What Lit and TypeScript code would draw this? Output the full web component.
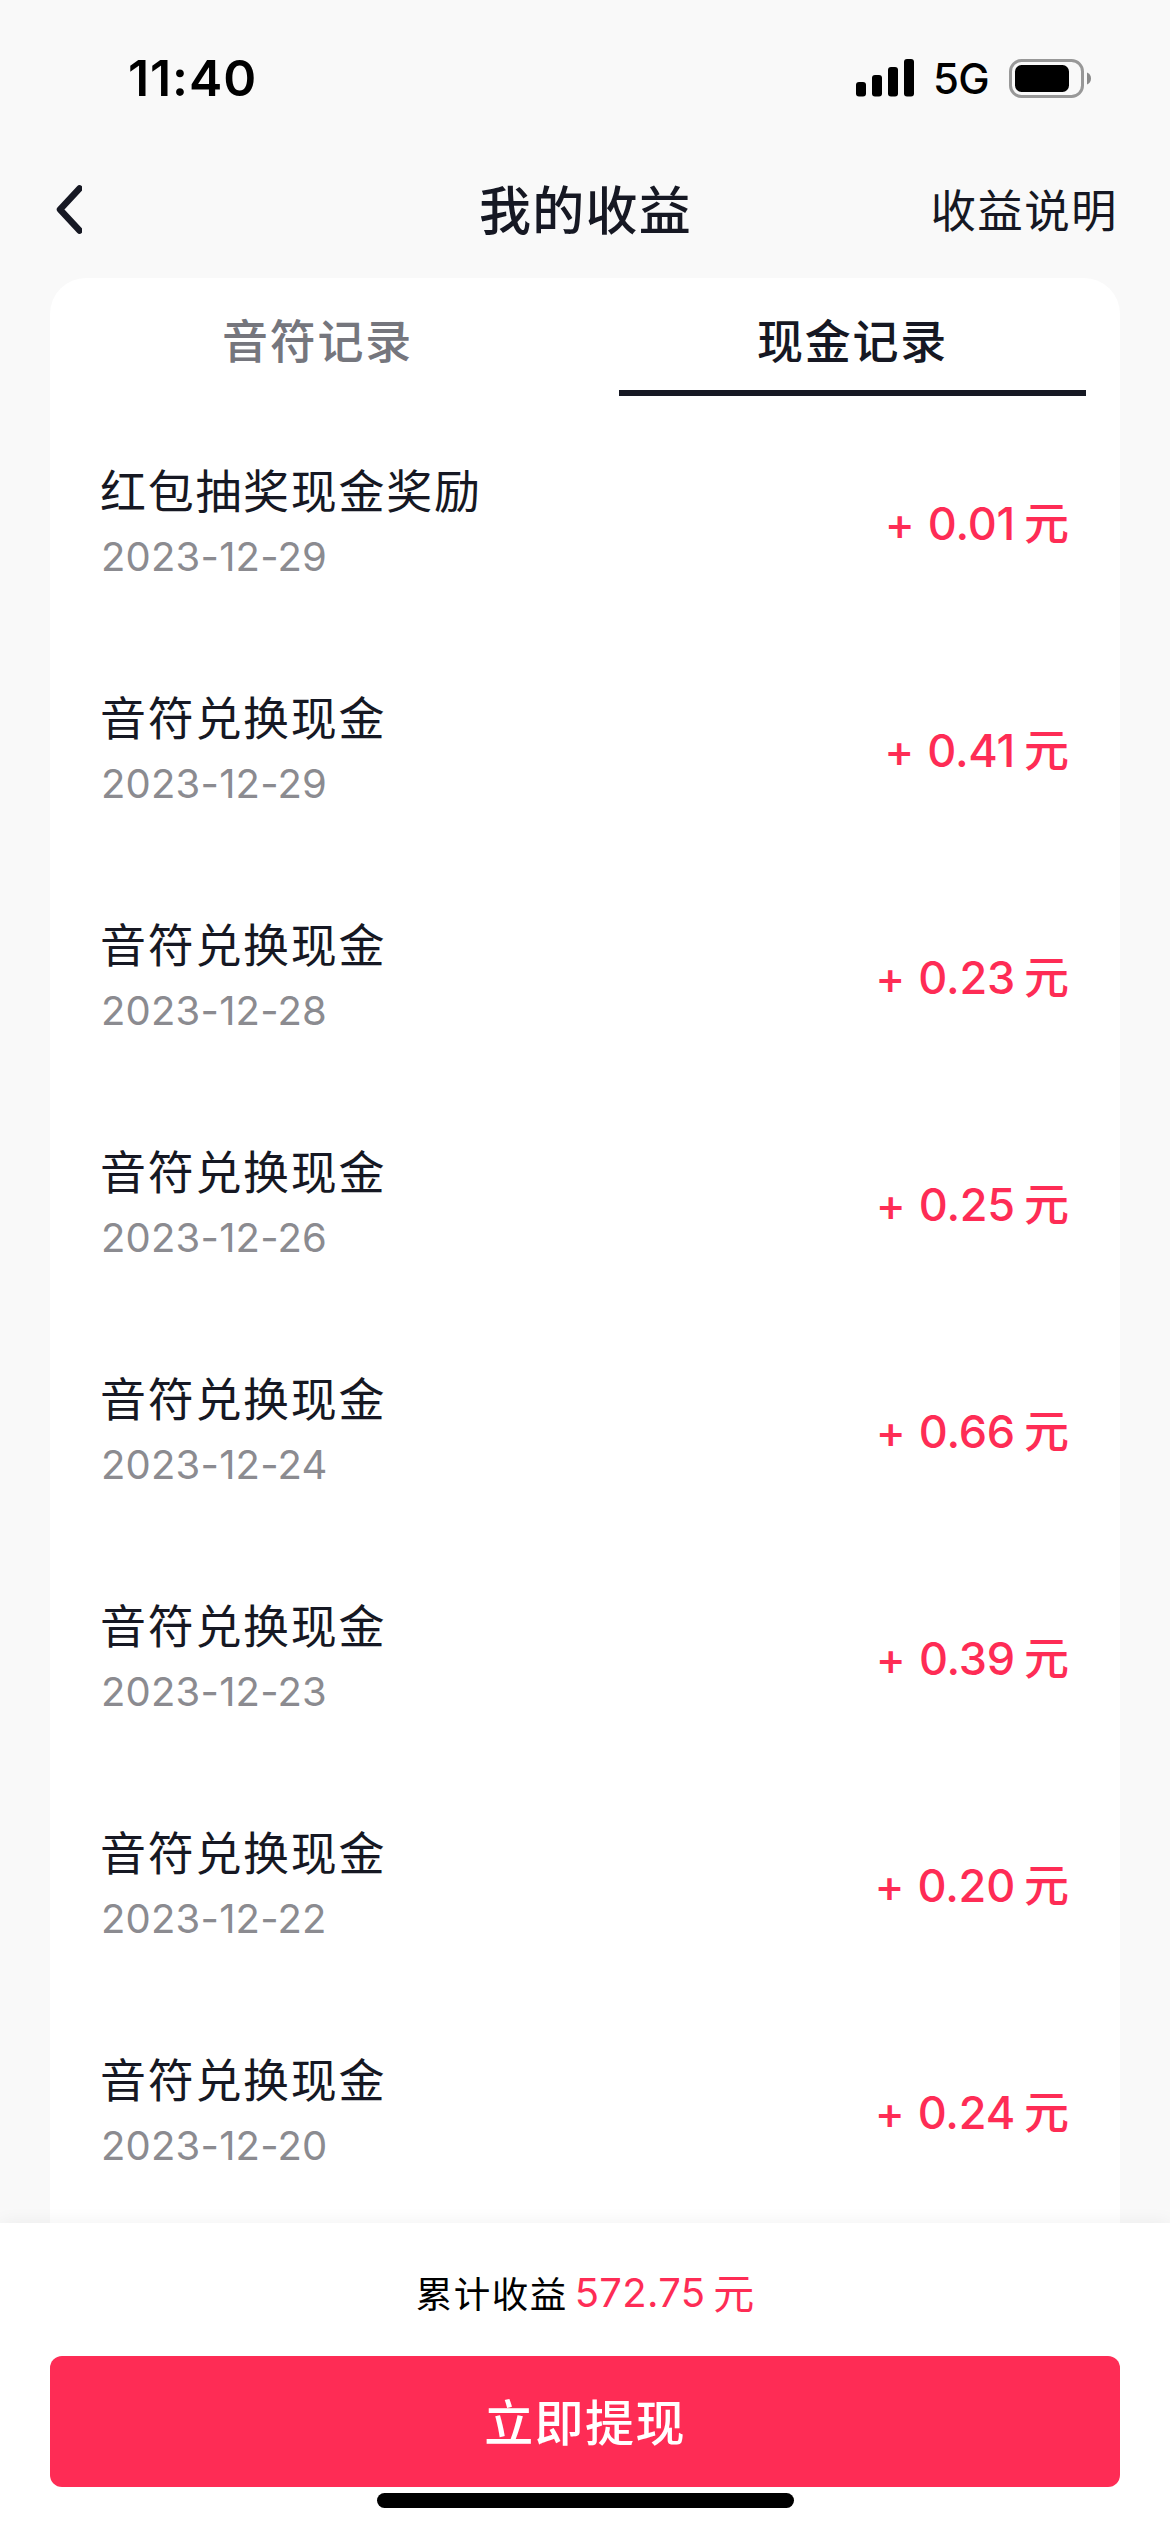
import { LitElement, html, css } from "lit";
import { customElement, property, state } from "lit/decorators.js";
import { classMap } from "lit/directives/class-map.js";

interface EarningRecord {
  title: string;
  date: string;
  amount: string;
}

const RECORDS: EarningRecord[] = [
  { title: "红包抽奖现金奖励", date: "2023-12-29", amount: "0.01" },
  { title: "音符兑换现金", date: "2023-12-29", amount: "0.41" },
  { title: "音符兑换现金", date: "2023-12-28", amount: "0.23" },
  { title: "音符兑换现金", date: "2023-12-26", amount: "0.25" },
  { title: "音符兑换现金", date: "2023-12-24", amount: "0.66" },
  { title: "音符兑换现金", date: "2023-12-23", amount: "0.39" },
  { title: "音符兑换现金", date: "2023-12-22", amount: "0.20" },
  { title: "音符兑换现金", date: "2023-12-20", amount: "0.24" },
];

@customElement("status-bar")
export class StatusBar extends LitElement {
  static styles = css`
    :host {
      display: flex;
      align-items: center;
      justify-content: space-between;
      height: 156px;
      padding: 0 78px 0 128px;
      box-sizing: border-box;
      color: #000;
    }
    .time {
      font-size: 50px;
      font-weight: 600;
      letter-spacing: 0.9px;
    }
    .indicators {
      display: flex;
      align-items: center;
    }
    .signal {
      display: block;
      margin-right: 19px;
    }
    .network {
      font-size: 42px;
      font-weight: 450;
      line-height: 50px;
      margin: 2px 20px 0 0;
      letter-spacing: -0.7px;
    }
    .battery {
      display: block;
    }
  `;

  render() {
    return html`
      <span class="time">11:40</span>
      <div class="indicators">
        <svg class="signal" width="58" height="38" viewBox="0 0 58 38">
          <rect x="0" y="23" width="10" height="14.5" rx="3" />
          <rect x="16" y="16" width="10" height="21.5" rx="3" />
          <rect x="32" y="8" width="10" height="29.5" rx="3" />
          <rect x="48" y="0" width="10" height="37.5" rx="3" />
        </svg>
        <span class="network">5G</span>
        <svg class="battery" width="83" height="39" viewBox="0 0 83 39">
          <rect x="1.5" y="1.5" width="72" height="36" rx="11" fill="none" stroke="#989898" stroke-width="3" />
          <rect x="6" y="6" width="54" height="27" rx="6.5" />
          <path d="M78 13.5c2.600 1 4 3.300 4 6s-1.400 5-4 6z" fill="#8a8a8a" />
        </svg>
      </div>
    `;
  }
}

@customElement("nav-header")
export class NavHeader extends LitElement {
  static styles = css`
    :host {
      display: grid;
      grid-template-columns: 1fr auto 1fr;
      align-items: center;
      height: 108px;
      padding: 0 52px 0 53px;
      color: #161823;
    }
    .back {
      display: block;
    }
    .title {
      padding-bottom: 5px;
      font-size: 52px;
      font-weight: 500;
      letter-spacing: 1.3px;
    }
    .link {
      justify-self: end;
      padding-bottom: 5px;
      font-size: 45.5px;
      letter-spacing: 1.4px;
    }
  `;

  render() {
    return html`
      <svg class="back" width="29" height="54" viewBox="0 0 29 54">
        <path d="M26.500 5.500L7 26.500L26.500 47.500" fill="none" stroke="#161823" stroke-width="6.500"
          stroke-linecap="round" stroke-linejoin="round" />
      </svg>
      <span class="title">我的收益</span>
      <span class="link">收益说明</span>
    `;
  }
}

@customElement("record-row")
export class RecordRow extends LitElement {
  @property({ attribute: false }) record!: EarningRecord;

  static styles = css`
    :host {
      display: flex;
      align-items: center;
      justify-content: space-between;
      height: 227px;
      padding: 0 51px 0 50px;
    }
    .title {
      font-size: 46px;
      line-height: 63px;
      padding-bottom: 3px;
      letter-spacing: 1.7px;
      color: #161823;
    }
    .date {
      padding-left: 1px;
      font-size: 40px;
      line-height: 62px;
      letter-spacing: 0.2px;
      color: #8b8b90;
    }
    .amount {
      display: flex;
      align-items: center;
      font-size: 45px;
      line-height: 60px;
      font-weight: 500;
      color: #fe2c55;
    }
    .value {
      margin: 0 9px 0 13px;
      letter-spacing: -0.2px;
    }
  `;

  render() {
    const { title, date, amount } = this.record;
    return html`
      <div>
        <div class="title">${title}</div>
        <div class="date">${date}</div>
      </div>
      <div class="amount">
        <span>+</span><span class="value">${amount}</span><span>元</span>
      </div>
    `;
  }
}

@customElement("app-root")
export class AppRoot extends LitElement {
  @state() private activeTab = 1;

  private tabs = ["音符记录", "现金记录"];

  static styles = css`
    :host {
      display: flex;
      flex-direction: column;
      height: 2532px;
      overflow: hidden;
      background: #f9f9f9;
      font-family: Inter, "Noto Sans CJK SC", sans-serif;
    }
    .card {
      flex: 1;
      min-height: 0;
      overflow: hidden;
      margin: 14px 50px 0;
      border-radius: 36px 36px 0 0;
      background: #fff;
    }
    .tabs {
      display: grid;
      grid-template-columns: 1fr 1fr;
    }
    .tab {
      display: flex;
      justify-content: center;
      height: 112px;
      margin: 0 34px;
      border-bottom: 6px solid transparent;
      font-size: 46px;
      line-height: 126px;
      font-weight: 500;
      letter-spacing: 1.8px;
      color: #75767d;
    }
    .tab.active {
      border-color: #161823;
      color: #161823;
    }
    .list {
      padding-top: 14px;
    }
    .footer {
      position: relative;
      display: flex;
      flex-direction: column;
      align-items: center;
      height: 309px;
      background: #fff;
      box-shadow: 0 0 18px rgba(0, 0, 0, 0.06);
    }
    .total {
      display: flex;
      align-items: center;
      padding-top: 38px;
      height: 62px;
      margin-bottom: 33px;
    }
    .total-label {
      font-size: 36.5px;
      letter-spacing: 1.5px;
      color: #000;
    }
    .total-value {
      margin: 0 8px 0 7px;
      font-size: 40px;
      letter-spacing: 0.3px;
      color: #fe2c55;
    }
    .total-unit {
      padding-bottom: 2px;
      font-size: 41px;
      color: #fe2c55;
    }
    .withdraw {
      width: 1070px;
      height: 131px;
      padding: 0 0 5px;
      border: 0;
      border-radius: 12px;
      background: #fe2c55;
      font-family: inherit;
      font-size: 49px;
      font-weight: 500;
      letter-spacing: 1.4px;
      color: #fff;
    }
    .home-indicator {
      width: 417px;
      height: 15px;
      margin-top: 6px;
      border-radius: 8px;
      background: #000;
    }
  `;

  render() {
    return html`
      <status-bar></status-bar>
      <nav-header></nav-header>
      <div class="card">
        <div class="tabs">
          ${this.tabs.map(
            (label, i) => html`<div
              class=${classMap({ tab: true, active: i === this.activeTab })}
              @click=${() => (this.activeTab = i)}
            >${label}</div>`
          )}
        </div>
        <div class="list">
          ${RECORDS.map((r) => html`<record-row .record=${r}></record-row>`)}
        </div>
      </div>
      <div class="footer">
        <div class="total">
          <span class="total-label">累计收益</span><span class="total-value">572.75</span><span class="total-unit">元</span>
        </div>
        <button class="withdraw">立即提现</button>
        <div class="home-indicator"></div>
      </div>
    `;
  }
}
